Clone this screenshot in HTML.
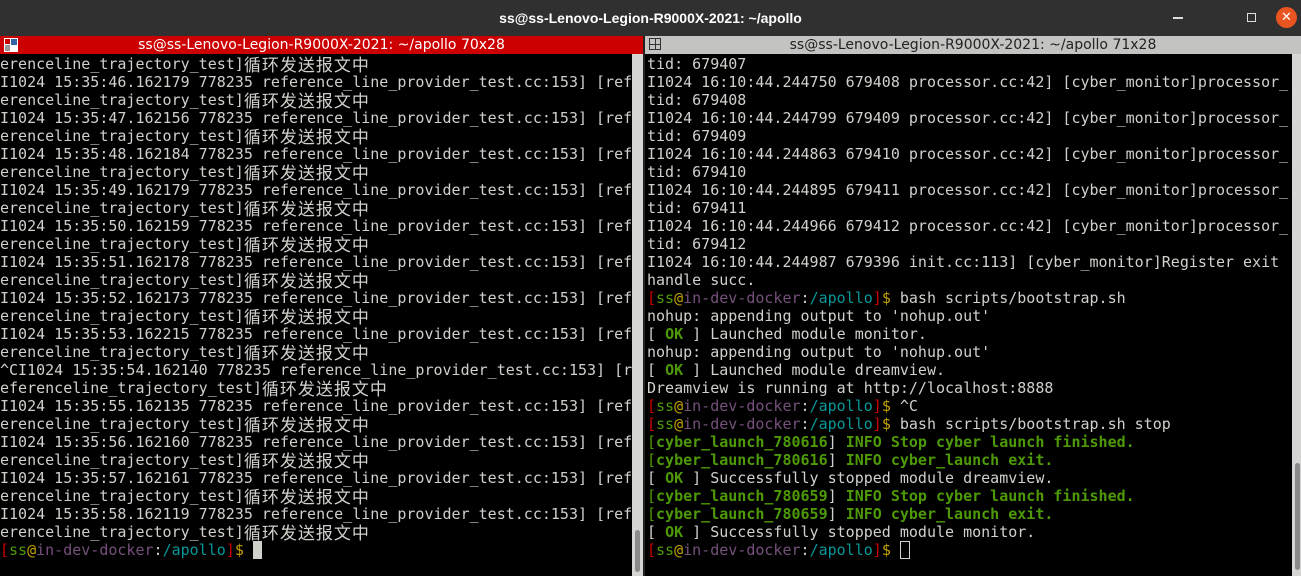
<!DOCTYPE html>
<html><head><meta charset="utf-8"><style>
*{margin:0;padding:0;box-sizing:border-box}
html,body{width:1301px;height:576px;overflow:hidden}
body{background:#000;position:relative;font-family:"DejaVu Sans Mono","Liberation Mono","Noto Sans CJK SC",monospace}
#tb{position:absolute;left:0;top:0;width:1301px;height:36px;background:#303030;color:#fff;font:bold 14px "Liberation Sans","DejaVu Sans",sans-serif;text-align:center;line-height:36px}
.hd{position:absolute;top:36px;height:18px;font:14px "DejaVu Sans","Liberation Sans",sans-serif;line-height:18px;text-align:center;overflow:hidden}
#hl{left:0;width:643px;background:#cc0000;color:#fff}
#hr{left:645px;width:656px;background:#c3c3c1;color:#222}
.pane{position:absolute;top:55px;font-size:15px;line-height:18px;color:#cfd1cb}
.pane div{height:18px;line-height:18px;white-space:pre;overflow:hidden}
.cjk{display:inline-block;vertical-align:top;height:18px;font-family:"Noto Sans CJK SC",sans-serif;font-size:17px;letter-spacing:1px;line-height:18px}
.r{color:#cc0000}.g{color:#4e9a06}.y{color:#c4a000}.p{color:#75507b}.c{color:#06989a}.b{color:#4e9a06;font-weight:bold}
.sb{position:absolute;background:#d5d5d3}
.th{position:absolute;background:#8a8a8a;border-radius:3px}
</style></head><body>
<div id="tb">ss@ss-Lenovo-Legion-R9000X-2021: ~/apollo</div>
<div style="position:absolute;left:1173px;top:17px;width:10px;height:2px;background:#ddd"></div>
<div style="position:absolute;left:1247px;top:13px;width:9px;height:9px;border:1.5px solid #ddd"></div>
<div style="position:absolute;left:1276px;top:7px;width:21px;height:21px;border-radius:50%;background:#e95420;color:#fff;font:bold 13px 'DejaVu Sans',sans-serif;text-align:center;line-height:21px">✕</div>
<div class="hd" id="hl">ss@ss-Lenovo-Legion-R9000X-2021: ~/apollo 70x28</div>
<div style="position:absolute;left:4px;top:38px;width:14px;height:14px;background:#fff"><div style="position:absolute;left:1px;top:1px;width:5px;height:5px;background:#c00"></div><div style="position:absolute;left:7px;top:1px;width:6px;height:6px;background:#3465a4"></div><div style="position:absolute;left:1px;top:7px;width:5px;height:6px;background:#999"></div></div>
<div class="hd" id="hr">ss@ss-Lenovo-Legion-R9000X-2021: ~/apollo 71x28</div>
<div style="position:absolute;left:649px;top:38px;width:12px;height:12px;border:1px solid #333"><div style="position:absolute;left:5px;top:0;width:1px;height:10px;background:#333"></div><div style="position:absolute;left:0;top:5px;width:10px;height:1px;background:#333"></div></div>
<div style="position:absolute;left:643px;top:36px;width:2px;height:540px;background:#222"></div>

<div class="pane" style="left:0;width:632px">
<div>erenceline_trajectory_test]<span class="cjk">循环发送报文中</span></div>
<div>I1024 15:35:46.162179 778235 reference_line_provider_test.cc:153] [ref</div>
<div>erenceline_trajectory_test]<span class="cjk">循环发送报文中</span></div>
<div>I1024 15:35:47.162156 778235 reference_line_provider_test.cc:153] [ref</div>
<div>erenceline_trajectory_test]<span class="cjk">循环发送报文中</span></div>
<div>I1024 15:35:48.162184 778235 reference_line_provider_test.cc:153] [ref</div>
<div>erenceline_trajectory_test]<span class="cjk">循环发送报文中</span></div>
<div>I1024 15:35:49.162179 778235 reference_line_provider_test.cc:153] [ref</div>
<div>erenceline_trajectory_test]<span class="cjk">循环发送报文中</span></div>
<div>I1024 15:35:50.162159 778235 reference_line_provider_test.cc:153] [ref</div>
<div>erenceline_trajectory_test]<span class="cjk">循环发送报文中</span></div>
<div>I1024 15:35:51.162178 778235 reference_line_provider_test.cc:153] [ref</div>
<div>erenceline_trajectory_test]<span class="cjk">循环发送报文中</span></div>
<div>I1024 15:35:52.162173 778235 reference_line_provider_test.cc:153] [ref</div>
<div>erenceline_trajectory_test]<span class="cjk">循环发送报文中</span></div>
<div>I1024 15:35:53.162215 778235 reference_line_provider_test.cc:153] [ref</div>
<div>erenceline_trajectory_test]<span class="cjk">循环发送报文中</span></div>
<div>^CI1024 15:35:54.162140 778235 reference_line_provider_test.cc:153] [r</div>
<div>eferenceline_trajectory_test]<span class="cjk">循环发送报文中</span></div>
<div>I1024 15:35:55.162135 778235 reference_line_provider_test.cc:153] [ref</div>
<div>erenceline_trajectory_test]<span class="cjk">循环发送报文中</span></div>
<div>I1024 15:35:56.162160 778235 reference_line_provider_test.cc:153] [ref</div>
<div>erenceline_trajectory_test]<span class="cjk">循环发送报文中</span></div>
<div>I1024 15:35:57.162161 778235 reference_line_provider_test.cc:153] [ref</div>
<div>erenceline_trajectory_test]<span class="cjk">循环发送报文中</span></div>
<div>I1024 15:35:58.162119 778235 reference_line_provider_test.cc:153] [ref</div>
<div>erenceline_trajectory_test]<span class="cjk">循环发送报文中</span></div>
<div><span class="r">[</span><span class="g">ss</span><span class="y">@</span><span class="p">in-dev-docker</span>:<span class="c">/apollo</span><span class="r">]</span><span class="y">$</span> <span style="background:#cfd1cb"> </span></div>
</div>
<div class="sb" style="left:632px;top:54px;width:11px;height:522px"></div>
<div class="th" style="left:635px;top:530px;width:5px;height:42px"></div>

<div class="pane" style="left:647px;width:645px">
<div>tid: 679407</div>
<div>I1024 16:10:44.244750 679408 processor.cc:42] [cyber_monitor]processor_</div>
<div>tid: 679408</div>
<div>I1024 16:10:44.244799 679409 processor.cc:42] [cyber_monitor]processor_</div>
<div>tid: 679409</div>
<div>I1024 16:10:44.244863 679410 processor.cc:42] [cyber_monitor]processor_</div>
<div>tid: 679410</div>
<div>I1024 16:10:44.244895 679411 processor.cc:42] [cyber_monitor]processor_</div>
<div>tid: 679411</div>
<div>I1024 16:10:44.244966 679412 processor.cc:42] [cyber_monitor]processor_</div>
<div>tid: 679412</div>
<div>I1024 16:10:44.244987 679396 init.cc:113] [cyber_monitor]Register exit</div>
<div>handle succ.</div>
<div><span class="r">[</span><span class="g">ss</span><span class="y">@</span><span class="p">in-dev-docker</span>:<span class="c">/apollo</span><span class="r">]</span><span class="y">$</span> bash scripts/bootstrap.sh</div>
<div>nohup: appending output to 'nohup.out'</div>
<div>[ <span class="b">OK</span> ] Launched module monitor.</div>
<div>nohup: appending output to 'nohup.out'</div>
<div>[ <span class="b">OK</span> ] Launched module dreamview.</div>
<div>Dreamview is running at http://localhost:8888</div>
<div><span class="r">[</span><span class="g">ss</span><span class="y">@</span><span class="p">in-dev-docker</span>:<span class="c">/apollo</span><span class="r">]</span><span class="y">$</span> ^C</div>
<div><span class="r">[</span><span class="g">ss</span><span class="y">@</span><span class="p">in-dev-docker</span>:<span class="c">/apollo</span><span class="r">]</span><span class="y">$</span> bash scripts/bootstrap.sh stop</div>
<div><span class="g">[</span><span class="b">cyber_launch_780616</span>] <span class="b">INFO Stop cyber launch finished.</span></div>
<div><span class="g">[</span><span class="b">cyber_launch_780616</span>] <span class="b">INFO cyber_launch exit.</span></div>
<div>[ <span class="b">OK</span> ] Successfully stopped module dreamview.</div>
<div><span class="g">[</span><span class="b">cyber_launch_780659</span>] <span class="b">INFO Stop cyber launch finished.</span></div>
<div><span class="g">[</span><span class="b">cyber_launch_780659</span>] <span class="b">INFO cyber_launch exit.</span></div>
<div>[ <span class="b">OK</span> ] Successfully stopped module monitor.</div>
<div><span class="r">[</span><span class="g">ss</span><span class="y">@</span><span class="p">in-dev-docker</span>:<span class="c">/apollo</span><span class="r">]</span><span class="y">$</span> <span style="display:inline-block;width:10px;height:18px;border:1px solid #cfd1cb;vertical-align:top"></span></div>
</div>
<div class="sb" style="left:1292px;top:54px;width:9px;height:522px"></div>
<div class="th" style="left:1295px;top:463px;width:5px;height:107px"></div>
</body></html>
